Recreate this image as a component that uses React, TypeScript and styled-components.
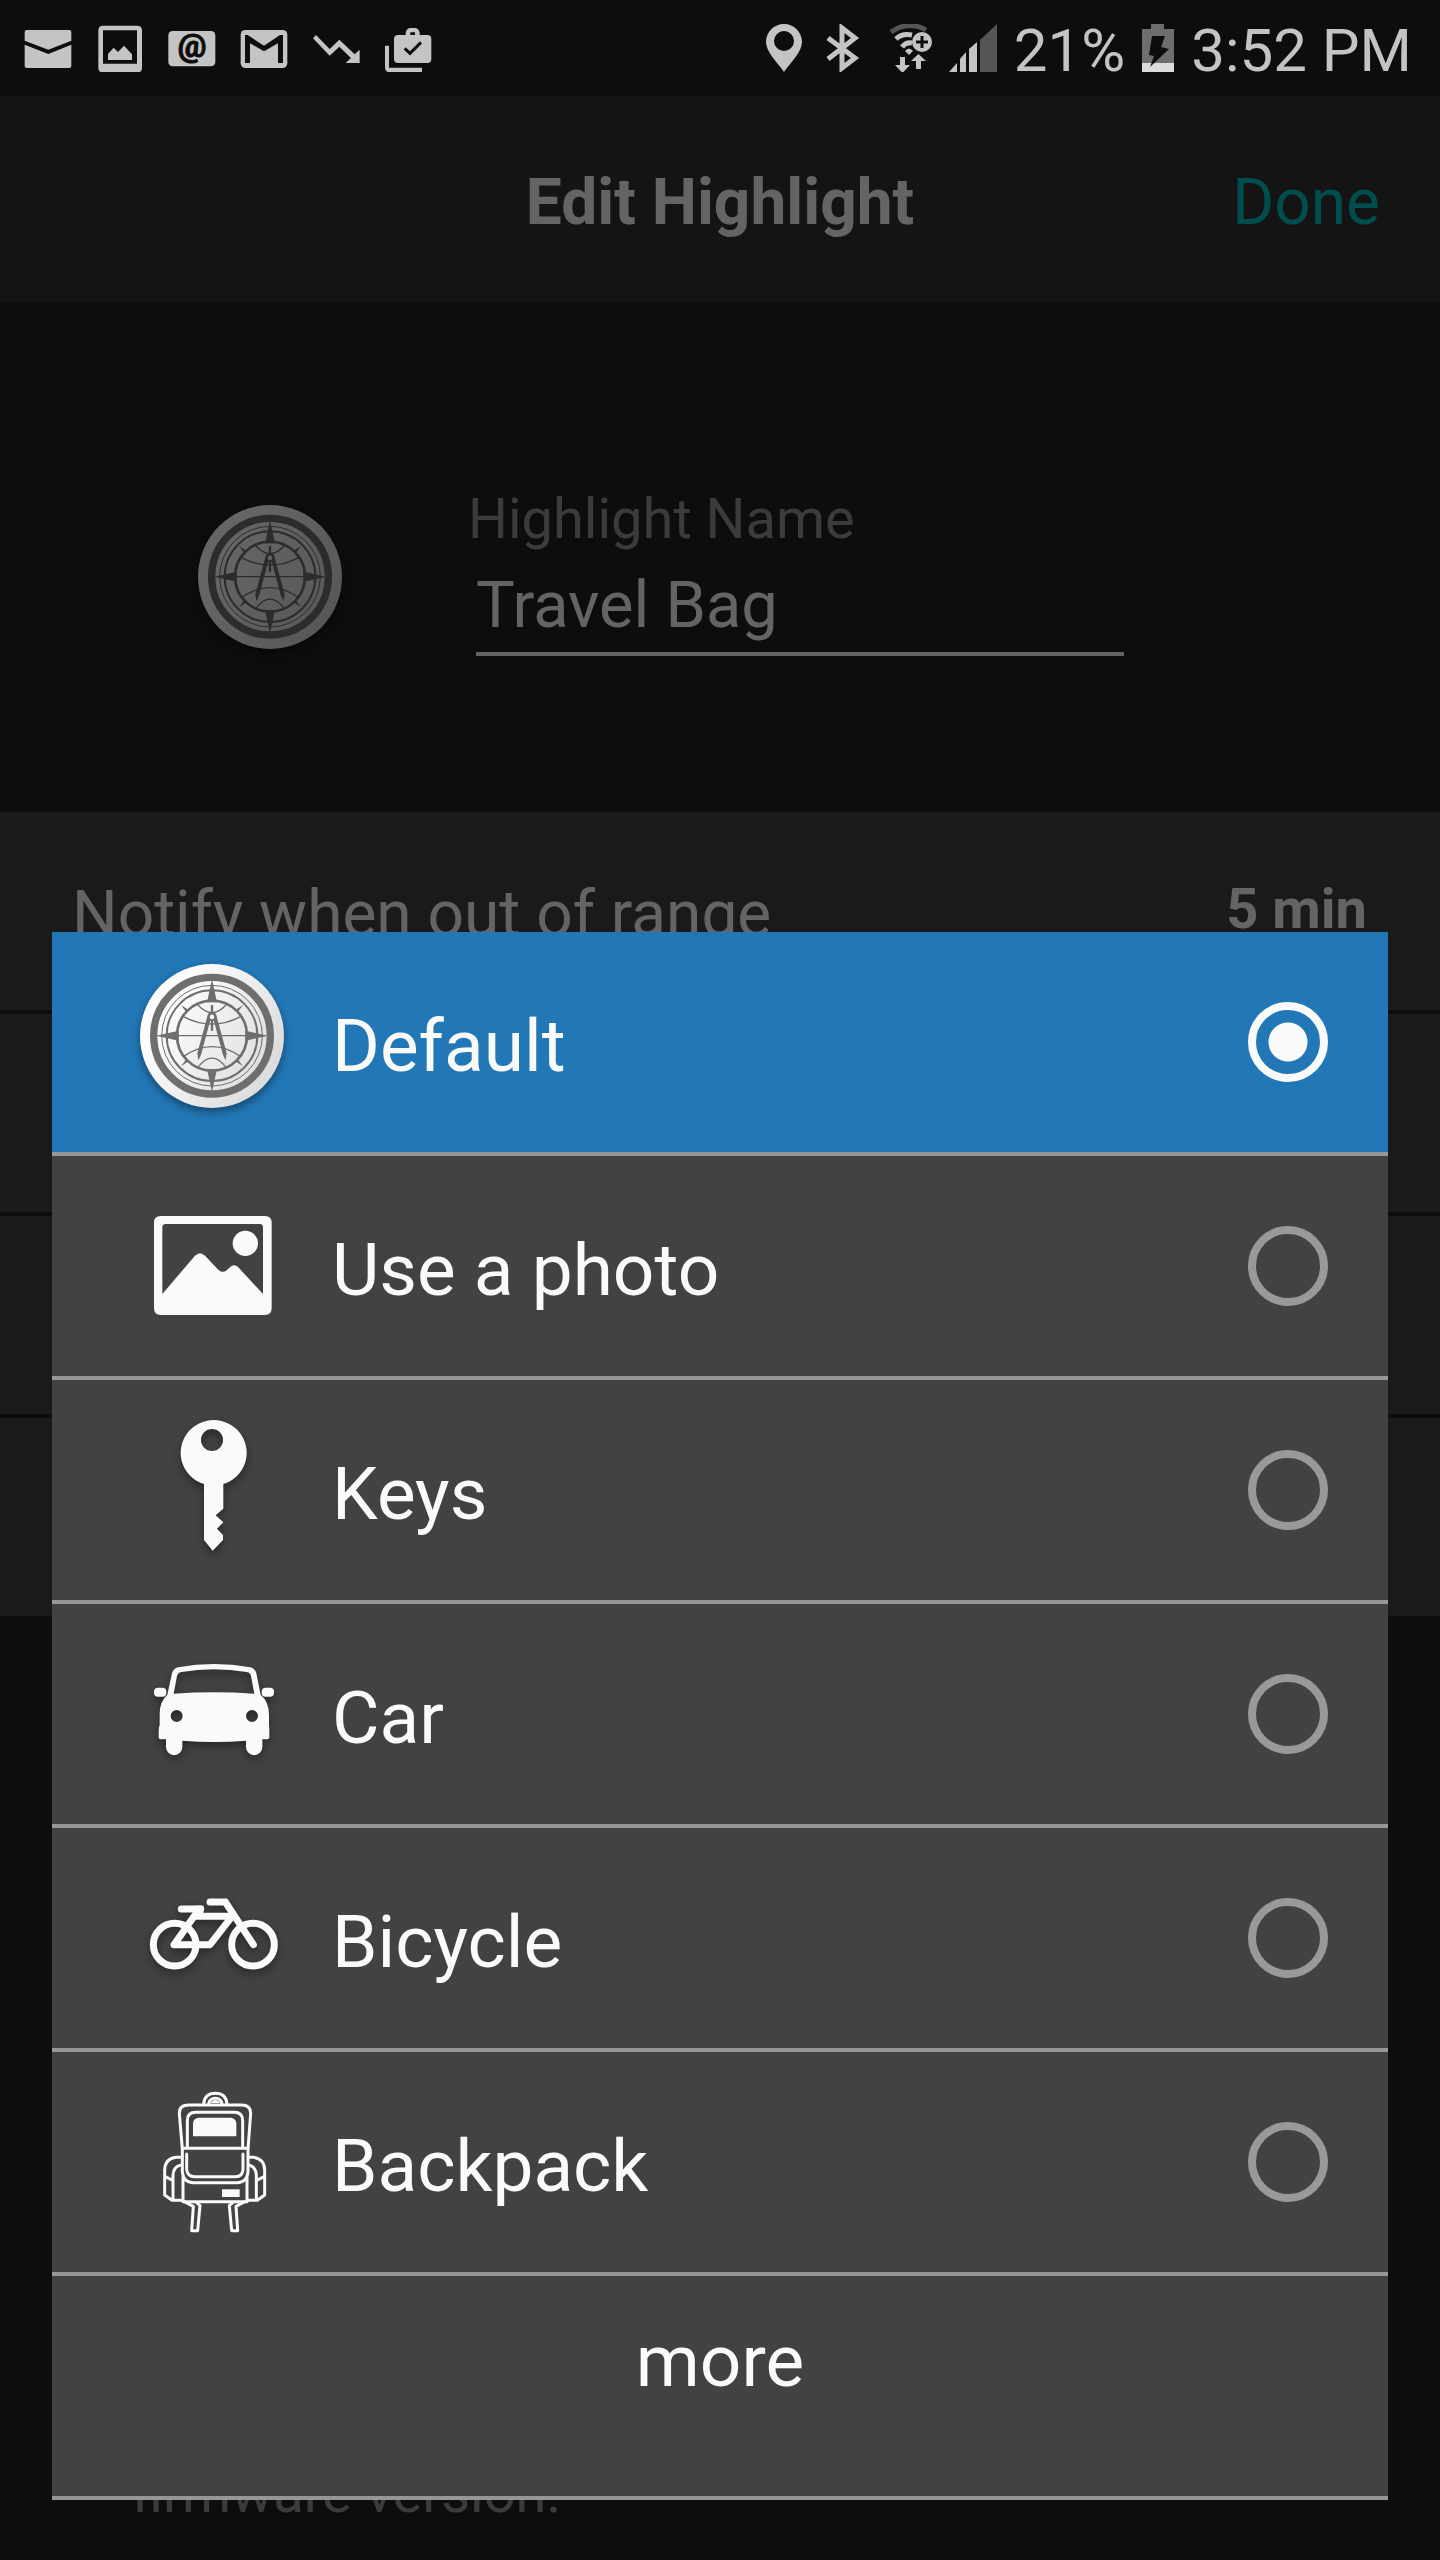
import React, { useState } from "react";
import styled, { createGlobalStyle } from "styled-components";

const GlobalStyle = createGlobalStyle`
  *, *::before, *::after { box-sizing: border-box; }
  body {
    margin: 0;
    background: #0d0d0d;
    color: #fafafa;
    font-family: Roboto, "Noto Sans", sans-serif;
  }
  button, input { font-family: inherit; }
`;

const Screen = styled.div`
  display: flex;
  flex-direction: column;
  min-height: 100vh;
`;

/* ---------- status bar ---------- */

const StatusBar = styled.div`
  display: flex;
  justify-content: space-between;
  align-items: center;
  height: 96px;
  padding: 0 28px 0 24px;
  background: #0d0d0d;
  color: #c4c4c4;
`;

const StatusGroup = styled.div<{ $gap: number }>`
  display: flex;
  align-items: center;
  gap: ${(p) => p.$gap}px;
`;

const StatusIcon = styled.svg`
  display: block;
  height: 48px;
  fill: currentColor;
`;

const StatusText = styled.span`
  padding-top: 6px;
  font-size: 60px;
  line-height: 72px;
  white-space: nowrap;
`;

const BAR = "#0d0d0d";

const NotificationIcons = () => (
  <StatusGroup $gap={24}>
    <StatusIcon width="48" viewBox="72 72 144 144">
      <path d="M80 90H208a6 6 0 0 1 6 6V122L145 149L74 122V96a6 6 0 0 1 6-6zM74 134L145 162L214 134V198a6 6 0 0 1-6 6H80a6 6 0 0 1-6-6z" />
    </StatusIcon>
    <StatusIcon width="48" viewBox="288 72 144 144">
      <path
        fillRule="evenodd"
        d="M309 77H412q14 0 14 14V203q0 14-14 14H309q-14 0-14-14V91q0-14 14-14zM309 91V191H411V91z"
      />
      <path d="M324 180V162L341 143L354 156L372 137L396 163V180z" />
    </StatusIcon>
    <StatusIcon width="48" viewBox="504 72 144 144">
      <rect x="505" y="93" width="141" height="106" rx="13" />
      <text
        x="576"
        y="171"
        textAnchor="middle"
        fontFamily="Roboto, sans-serif"
        fontSize="96"
        fontWeight="700"
        fill={BAR}
        stroke={BAR}
        strokeWidth="3"
      >
        @
      </text>
    </StatusIcon>
    <StatusIcon width="48" viewBox="720 72 144 144">
      <rect x="722" y="90" width="140" height="114" rx="14" />
      <path fill={BAR} d="M735 189V105H743L792 137L840 105H849V189H834V130L792 154L750 130V189z" />
    </StatusIcon>
    <StatusIcon width="48" viewBox="936 72 144 144">
      <path d="M948 105L989 147L1018 119L1064 163L1079 149V189H1037L1053 174L1018 140L989 167L939 115z" />
    </StatusIcon>
    <StatusIcon width="48" viewBox="1152 72 144 144">
      <path d="M1155 137H1167V203H1266V217H1170q-15 0-15-15z" />
      <path
        fillRule="evenodd"
        d="M1194 105H1217V98Q1220 84 1232 84H1244Q1256 84 1259 98V105H1282q12 0 12 12V177q0 12-12 12H1194q-12 0-12-12V117q0-12 12-12zM1231 97V105H1245V97z"
      />
      <path d="M1214 145L1230 160L1263 127" fill="none" stroke={BAR} strokeWidth="9" />
    </StatusIcon>
  </StatusGroup>
);

const SystemIcons = () => (
  <StatusGroup $gap={17}>
    <StatusIcon width="36" viewBox="0 0 36 48">
      <path
        fillRule="evenodd"
        d="M18 0C28 0 36 8 36 18C36 28 24 39 18 48C12 39 0 28 0 18C0 8 8 0 18 0zM18 7a10 10 0 1 0 0 20a10 10 0 1 0 0-20z"
      />
    </StatusIcon>
    <StatusIcon width="48" viewBox="0 0 48 48">
      <path
        d="M9 14L36 34L23 44V4L36 14L9 35"
        fill="none"
        stroke="currentColor"
        strokeWidth="5"
      />
    </StatusIcon>
    <StatusIcon width="48" viewBox="0 0 48 48">
      <g fill="none" strokeWidth="5">
        <path d="M7 8Q24-4 42 6" stroke="#555555" />
        <path d="M12 15Q18 9 28 11" stroke="currentColor" />
        <path d="M18 23Q22 18 28 19" stroke="currentColor" />
      </g>
      <path d="M21 27Q25 22 29 27L25 31z" />
      <circle cx="38" cy="18" r="10" />
      <path d="M38 12V24M32 18H44" stroke={BAR} strokeWidth="3" />
      <path d="M16 33H21V41H26L18.500 49L11 41H16z" />
      <path d="M32 45H37V37H42L34.500 30L27 37H32z" />
    </StatusIcon>
    <StatusIcon width="48" viewBox="0 0 48 48">
      <path d="M0 48L8 39V48zM11 48V35L17 28V48zM20 48V25L28 18V48z" />
      <path d="M31 48V16L48 0V48z" fill="#555555" />
    </StatusIcon>
    <StatusText>21%</StatusText>
    <StatusIcon width="32" viewBox="0 0 32 48">
      <path d="M9 0H22V5H32V48H0V5H9z" fill="#6e6e6e" />
      <rect y="39" width="32" height="9" fill="#dcdcdc" />
      <path d="M10 12H23L19 23L27 25L8 43L12 32L7 31z" fill={BAR} />
    </StatusIcon>
    <StatusText>3:52 PM</StatusText>
  </StatusGroup>
);

/* ---------- page under the dialog ---------- */

const Main = styled.main`
  position: relative;
  display: flex;
  flex: 1;
  flex-direction: column;
  background: #212121;
`;

const Header = styled.header`
  display: grid;
  grid-template-columns: 1fr auto 1fr;
  align-items: center;
  height: 206px;
  padding: 8px 60px 0;
  background: #333333;
`;

const Title = styled.h1`
  grid-column: 2;
  margin: 0;
  font-size: 64px;
  line-height: 76px;
  font-weight: 700;
`;

const DoneButton = styled.button`
  justify-self: end;
  padding: 0;
  border: 0;
  background: none;
  color: #00c0c0;
  font-size: 64px;
  line-height: 76px;
`;

const NameSection = styled.section`
  display: flex;
  align-items: flex-start;
  gap: 118px;
  height: 510px;
  padding: 185px 316px 0 190px;
`;

const CoinFrame = styled.div`
  flex: none;
  padding-top: 16px;
`;

const NameField = styled.div`
  display: flex;
  flex: 1;
  flex-direction: column;
  min-width: 0;
`;

const NameLabel = styled.label`
  color: #949494;
  font-size: 56px;
  line-height: 64px;
`;

const NameInput = styled.input`
  height: 105px;
  min-width: 0;
  margin-left: 8px;
  padding: 6px 0 0;
  border: 0;
  border-bottom: 4px solid #fafafa;
  border-radius: 0;
  outline: none;
  background: none;
  color: #fafafa;
  font-size: 65px;
`;

const Settings = styled.ul`
  margin: 0;
  padding: 0;
  list-style: none;
`;

const SettingRow = styled.li`
  display: flex;
  justify-content: space-between;
  align-items: center;
  height: 202px;
  padding: 0 73px 0 72px;
  border-bottom: 4px solid #212121;
  background: #424242;

  &:last-child {
    height: 198px;
    border-bottom: 0;
  }
`;

const SettingName = styled.span`
  padding-top: 8px;
  font-size: 64px;
  line-height: 76px;
`;

const SettingValue = styled.strong`
  padding-bottom: 4px;
  font-size: 56px;
  line-height: 64px;
  font-weight: 700;
`;

const Footnote = styled.p`
  margin: auto 0 0;
  padding: 0 132px 34px;
  color: #949494;
  font-size: 56px;
  line-height: 66px;
`;

/* ---------- dialog ---------- */

const Scrim = styled.div`
  position: absolute;
  inset: 0;
  display: flex;
  align-items: flex-end;
  padding: 0 52px 60px;
  background: rgba(0, 0, 0, 0.6);
`;

const Dialog = styled.div`
  flex: 1;
  background: #424242;
`;

const OptionRow = styled.label<{ $selected: boolean }>`
  display: flex;
  align-items: center;
  gap: 40px;
  height: 224px;
  padding: 0 60px 0 80px;
  border-bottom: 4px solid #969696;
  background: ${(p) => (p.$selected ? "#2277b6" : "transparent")};
`;

const OptionName = styled.span`
  flex: 1;
  padding-top: 8px;
  font-size: 73px;
  line-height: 84px;
`;

const Radio = styled.input`
  appearance: none;
  width: 80px;
  height: 80px;
  margin: 0;
  border: 8px solid #999999;
  border-radius: 50%;

  &:checked {
    border-color: #fafafa;
    background: radial-gradient(circle, #fafafa 19px, transparent 20px);
  }
`;

const MoreButton = styled.button`
  display: block;
  width: 100%;
  height: 224px;
  padding: 0 0 50px;
  border: 0;
  border-bottom: 4px solid #969696;
  background: none;
  color: #fafafa;
  font-size: 73px;
  line-height: 84px;
`;

const Glyph = styled.svg<{ $shadow?: boolean }>`
  display: block;
  flex: none;
  width: 160px;
  height: 160px;
  overflow: visible;
  fill: #fafafa;
  filter: ${(p) => (p.$shadow ? "drop-shadow(0 4px 4px rgba(0, 0, 0, 0.4))" : "none")};
`;

const INK = "#6e6e6e";

const CoinIcon = ({ id }: { id: string }) => (
  <Glyph $shadow viewBox="36 66 480 480">
    <defs>
      <linearGradient id={id} x1="0" y1="0.2" x2="1" y2="0.8">
        <stop offset="0.2" stopColor="#fcfcfc" />
        <stop offset="1" stopColor="#d8d8d8" />
      </linearGradient>
    </defs>
    <circle cx="276" cy="288" r="216" fill={`url(#${id})`} />
    <g fill="none" stroke={INK}>
      <circle cx="276" cy="287" r="175" strokeWidth="22" />
      <circle cx="276" cy="287" r="151" strokeWidth="3" />
      <circle cx="276" cy="287" r="136" strokeWidth="6" />
      <circle cx="276" cy="287" r="105" strokeWidth="8" />
      <path
        strokeWidth="4"
        d="M172 287H380M234 195Q276 241 318 195M190 230Q276 275 362 230M190 350Q276 290 362 350M234 382Q276 327 318 382"
      />
      <path strokeWidth="7" d="M276 195V216M276 240V272" />
      <circle cx="276" cy="230" r="10" strokeWidth="6" />
    </g>
    <g fill={INK}>
      <path d="M276 118L291 187H261zM276 456L291 387H261zM108 287L176 272V302zM444 287L376 272V302z" />
      <path d="M183 195L206 210L199 217zM369 195L346 210L353 217zM183 379L206 364L199 357zM369 379L346 364L353 357z" />
      <path d="M264 222L276 214L271 240L243 345L235 361L232 340zM288 222L276 214L281 240L309 345L317 361L320 340z" />
    </g>
    <circle cx="276" cy="231" r="7" fill="#f2f2f2" />
  </Glyph>
);

const PhotoIcon = () => (
  <Glyph viewBox="6 -12 480 480">
    <path
      fillRule="evenodd"
      d="M92 78H405q20 0 20 20V355q0 20-20 20H92q-20 0-20-20V98q0-20 20-20zM107 102q-10 0-10 10V312L195 197Q210 182 225 197L265 239Q278 251 290 241L300 232Q312 220 325 232L399 312V112q0-10-10-10z"
    />
    <circle cx="346" cy="160" r="38" />
  </Glyph>
);

const KeyIcon = () => (
  <Glyph $shadow viewBox="6 30 480 480">
    <path
      fillRule="evenodd"
      d="M222 252A99 98 0 1 1 280 252V326L257 346L280 367L261 386L279 405V420L248 452L222 420zM246 87a33 33 0 1 0 0 66a33 33 0 1 0 0-66z"
    />
  </Glyph>
);

const CarIcon = () => (
  <Glyph $shadow viewBox="6 702 480 480">
    <rect x="72" y="863" width="37" height="27" rx="12" />
    <rect x="395" y="863" width="37" height="27" rx="12" />
    <path
      fillRule="evenodd"
      d="M112 884L126 820Q130 806 144 802Q252 782 361 802Q375 806 379 820L392 884Q417 905 417 945V976Q418 982 418 990V1012Q418 1018 412 1018H397V1042a24 23 0 0 1-49 0V1022Q252 1030 157 1022V1042a24 23 0 0 1-49 0V1018H92Q86 1018 86 1012V990Q86 982 89 976V945Q88 905 112 884zM131 881Q252 873 373 881L363 828Q361 818 350 816Q252 800 154 816Q144 818 141 828zM140 930a18 18 0 1 0 0 36a18 18 0 1 0 0-36zM366 930a18 18 0 1 0 0 36a18 18 0 1 0 0-36z"
    />
  </Glyph>
);

const BicycleIcon = () => (
  <Glyph $shadow viewBox="6 -6 480 480">
    <g fill="none" stroke="#fafafa" strokeWidth="21" strokeLinecap="round">
      <circle cx="134" cy="254" r="64" />
      <circle cx="369" cy="254" r="64" />
      <path d="M132 254L204 152M200 169H306L240 254H132" strokeLinejoin="round" />
      <path d="M240 126H286L370 254" />
      <path d="M154 147H212" />
    </g>
    <path d="M195 137H220V165H195z" />
  </Glyph>
);

const BackpackSide = () => (
  <>
    <path d="M154 262H138Q105 266 104 300V375L126 391H157" />
    <path d="M129 390V315Q131 288 154 285M104 319L128 331" />
    <path d="M162 394L190 409L185 482H203L210 407L198 396" />
  </>
);

const BackpackIcon = () => (
  <Glyph viewBox="6 36 480 480">
    <g fill="none" stroke="#fafafa" strokeWidth="9" strokeLinejoin="round">
      <path d="M221 102Q224 70 256 70Q288 70 291 102M236 102Q239 85 256 85Q273 85 276 102" />
      <path d="M157 237L148 130Q148 105 176 105H335Q362 105 362 130L354 237" />
      <path d="M172 237V152Q172 127 197 127H313Q338 127 338 152V237" />
      <path d="M157 235H354" />
      <path d="M157 235V305Q160 338 190 338H321Q351 338 354 305V235" />
      <path d="M170 252V298Q172 320 194 320H316Q338 320 339 298V252" strokeLinecap="round" />
      <path d="M159 320V395H351V320" />
      <BackpackSide />
      <g transform="translate(508 0) scale(-1 1)">
        <BackpackSide />
      </g>
    </g>
    <path d="M205 143H303Q319 145 319 162V199H189V162Q189 145 205 143z" />
    <path d="M242 99Q246 90 256 90Q266 90 270 99z" />
    <rect x="276" y="358" width="53" height="23" />
  </Glyph>
);

const OPTIONS = [
  { name: "Default", icon: <CoinIcon id="coin-option" /> },
  { name: "Use a photo", icon: <PhotoIcon /> },
  { name: "Keys", icon: <KeyIcon /> },
  { name: "Car", icon: <CarIcon /> },
  { name: "Bicycle", icon: <BicycleIcon /> },
  { name: "Backpack", icon: <BackpackIcon /> },
];

export default function App() {
  const [selected, setSelected] = useState("Default");

  return (
    <Screen>
      <GlobalStyle />
      <StatusBar>
        <NotificationIcons />
        <SystemIcons />
      </StatusBar>
      <Main>
        <Header>
          <Title>Edit Highlight</Title>
          <DoneButton type="button">Done</DoneButton>
        </Header>
        <NameSection>
          <CoinFrame>
            <CoinIcon id="coin-header" />
          </CoinFrame>
          <NameField>
            <NameLabel htmlFor="highlight-name">Highlight Name</NameLabel>
            <NameInput id="highlight-name" type="text" defaultValue="Travel Bag" />
          </NameField>
        </NameSection>
        <Settings>
          <SettingRow>
            <SettingName>Notify when out of range</SettingName>
            <SettingValue>5 min</SettingValue>
          </SettingRow>
          <SettingRow />
          <SettingRow />
          <SettingRow />
        </Settings>
        <Footnote>firmware version.</Footnote>
        <Scrim>
          <Dialog role="dialog" aria-modal="true">
            {OPTIONS.map(({ name, icon }) => (
              <OptionRow key={name} $selected={selected === name}>
                {icon}
                <OptionName>{name}</OptionName>
                <Radio
                  type="radio"
                  name="highlight-icon"
                  checked={selected === name}
                  onChange={() => setSelected(name)}
                />
              </OptionRow>
            ))}
            <MoreButton type="button">more</MoreButton>
          </Dialog>
        </Scrim>
      </Main>
    </Screen>
  );
}
